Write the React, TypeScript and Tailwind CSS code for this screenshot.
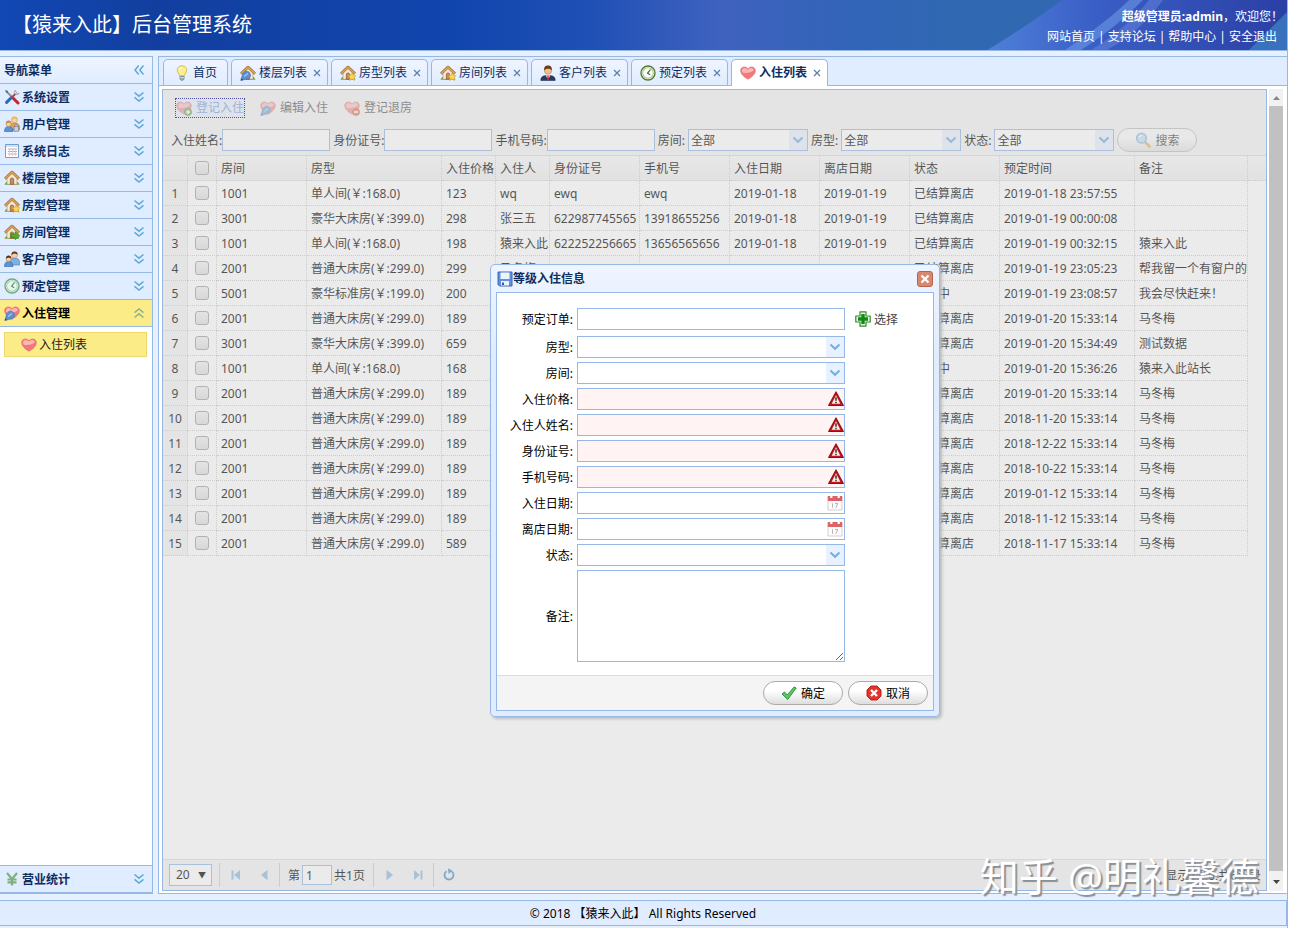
import { useState, type ReactNode } from 'react';
import clsx from 'clsx';

interface Guest {
    room: string;
    type: string;
    price: string;
    name?: string;
    idCard?: string;
    mobile?: string;
    arrive?: string;
    leave?: string;
    status: string;
    created: string;
    remark?: string;
}

const STANDARD = '普通大床房(￥:299.0)';
const LUXURY = '豪华大床房(￥:399.0)';
const SINGLE = '单人间(￥:168.0)';
const DONE = '已结算离店';

const guests: Guest[] = [
    { room: '1001', type: SINGLE, price: '123', name: 'wq', idCard: 'ewq', mobile: 'ewq', arrive: '2019-01-18', leave: '2019-01-19', status: DONE, created: '2019-01-18 23:57:55' },
    { room: '3001', type: LUXURY, price: '298', name: '张三五', idCard: '622987745565', mobile: '13918655256', arrive: '2019-01-18', leave: '2019-01-19', status: DONE, created: '2019-01-19 00:00:08' },
    { room: '1001', type: SINGLE, price: '198', name: '猿来入此', idCard: '622252256665', mobile: '13656565656', arrive: '2019-01-18', leave: '2019-01-19', status: DONE, created: '2019-01-19 00:32:15', remark: '猿来入此' },
    { room: '2001', type: STANDARD, price: '299', name: '马冬梅', status: DONE, created: '2019-01-19 23:05:23', remark: '帮我留一个有窗户的' },
    { room: '5001', type: '豪华标准房(￥:199.0)', price: '200', status: '入住中', created: '2019-01-19 23:08:57', remark: '我会尽快赶来！' },
    { room: '2001', type: STANDARD, price: '189', status: DONE, created: '2019-01-20 15:33:14', remark: '马冬梅' },
    { room: '3001', type: LUXURY, price: '659', status: DONE, created: '2019-01-20 15:34:49', remark: '测试数据' },
    { room: '1001', type: SINGLE, price: '168', status: '入住中', created: '2019-01-20 15:36:26', remark: '猿来入此站长' },
    { room: '2001', type: STANDARD, price: '189', status: DONE, created: '2019-01-20 15:33:14', remark: '马冬梅' },
    { room: '2001', type: STANDARD, price: '189', status: DONE, created: '2018-11-20 15:33:14', remark: '马冬梅' },
    { room: '2001', type: STANDARD, price: '189', status: DONE, created: '2018-12-22 15:33:14', remark: '马冬梅' },
    { room: '2001', type: STANDARD, price: '189', status: DONE, created: '2018-10-22 15:33:14', remark: '马冬梅' },
    { room: '2001', type: STANDARD, price: '189', status: DONE, created: '2019-01-12 15:33:14', remark: '马冬梅' },
    { room: '2001', type: STANDARD, price: '189', status: DONE, created: '2018-11-12 15:33:14', remark: '马冬梅' },
    { room: '2001', type: STANDARD, price: '589', status: DONE, created: '2018-11-17 15:33:14', remark: '马冬梅' },
];

const columns: { key: keyof Guest; title: string; width: string }[] = [
    { key: 'room', title: '房间', width: 'w-[90px]' },
    { key: 'type', title: '房型', width: 'w-[135px]' },
    { key: 'price', title: '入住价格', width: 'w-[54px]' },
    { key: 'name', title: '入住人', width: 'w-[54px]' },
    { key: 'idCard', title: '身份证号', width: 'w-[90px]' },
    { key: 'mobile', title: '手机号', width: 'w-[90px]' },
    { key: 'arrive', title: '入住日期', width: 'w-[90px]' },
    { key: 'leave', title: '离店日期', width: 'w-[90px]' },
    { key: 'status', title: '状态', width: 'w-[90px]' },
    { key: 'created', title: '预定时间', width: 'w-[135px]' },
    { key: 'remark', title: '备注', width: 'w-[113px]' },
];

/* ---------- icons ---------- */

function Icon({ children }: { children: ReactNode }) {
    return <svg viewBox="0 0 16 16" className="size-4 shrink-0" aria-hidden="true">{children}</svg>;
}

type Badge = 'add' | 'minus' | 'edit' | 'star' | 'arrow' | undefined;

function BadgeShape({ badge }: { badge: Badge }) {
    if (badge === 'add') {
        return (
            <g>
                <circle cx="12" cy="12" r="3.6" fill="#4fa32c" stroke="#2f7a17" strokeWidth=".7" />
                <path d="M12 10v4M10 12h4" stroke="#fff" strokeWidth="1.5" />
            </g>
        );
    }
    if (badge === 'minus') {
        return (
            <g>
                <circle cx="12" cy="12" r="3.6" fill="#e8562b" stroke="#c23d17" strokeWidth=".7" />
                <path d="M10 12h4" stroke="#fff" strokeWidth="1.6" />
            </g>
        );
    }
    if (badge === 'edit') {
        return (
            <g>
                <path d="M.8 15.500l2-7L5.500 6c3-.2 5.200 1.800 5.200 5L8 13.800z" fill="#5b8fd0" stroke="#4673b3" strokeWidth=".6" />
                <path d="M4 11.500l4-3" stroke="#a8cbf2" strokeWidth="1.200" />
                <path d="M.8 15.600l2.400-.7-1.700-1.700z" fill="#274a7c" />
            </g>
        );
    }
    if (badge === 'star') {
        return <path d="M12 8l1.200 2.500 2.700.3-2 1.900.6 2.700L12 14l-2.500 1.400.6-2.700-2-1.900 2.700-.3z" fill="#ffd84d" stroke="#d79f1e" strokeWidth=".6" />;
    }
    if (badge === 'arrow') {
        return <path d="M7 10h4.200V7.800l4.500 4-4.500 3.800v-2.200H7z" fill="#55b02e" stroke="#2e7d14" strokeWidth=".7" />;
    }
    return null;
}

function House({ badge }: { badge?: Badge }) {
    return (
        <Icon>
            <path d="M.5 14.800c1-3 3-3.500 7.500-3.500s6.500.5 7.500 3.500z" fill="#6bab3f" />
            <path d="M3 8l5-5 5 5v6.300H3z" fill="#f5ead6" stroke="#a88a5c" strokeWidth=".6" />
            <path d="M6.300 14.300V9.600a1.700 1.700 0 013.400 0v4.700z" fill="#c48a5c" stroke="#7d4a25" strokeWidth=".6" />
            <path d="M1 8.800L8 2l7 6.800" fill="none" stroke="#8a6232" strokeWidth="2.600" strokeLinejoin="round" />
            <path d="M1.200 8.600L8 2.100l6.800 6.500" fill="none" stroke="#e0a252" strokeWidth="1.600" />
            <BadgeShape badge={badge} />
        </Icon>
    );
}

function Heart({ badge }: { badge?: Badge }) {
    return (
        <Icon>
            <path d="M8 14.200C4 12 .7 9 .7 5.500.7 3.300 2.400 2 4.300 2 5.900 2 7.300 2.800 8 4c.7-1.200 2.100-2 3.700-2 1.900 0 3.600 1.300 3.600 3.500C15.300 9 12 12 8 14.200z" fill="#f4777b" stroke="#dc6a6c" strokeWidth=".7" />
            <path d="M2 5.800c0-1.800 1.200-2.700 2.500-2.700 1.400 0 2.500.7 3.100 1.900.8-1.200 2-1.900 3.500-1.900 1.500 0 2.700.8 2.800 2.200-2 2.300-8 3.500-11.500 2.200z" fill="#fbb7b4" />
            <BadgeShape badge={badge} />
        </Icon>
    );
}

function Clock({ soft }: { soft?: boolean }) {
    return (
        <Icon>
            <circle cx="8" cy="8" r="7" fill={soft ? '#e9f6ec' : '#fff'} stroke={soft ? '#6fa982' : '#567a35'} strokeWidth="1.400" />
            <circle cx="8" cy="8" r="5.300" fill="none" stroke={soft ? '#a9d3b5' : '#a8c88a'} strokeWidth="1.100" />
            <path d="M10.500 4.500L7.600 8.200l2.600 1.600" fill="none" stroke={soft ? '#5b8a6b' : '#3b5a3a'} strokeWidth="1.200" />
        </Icon>
    );
}

function Tools() {
    return (
        <Icon>
            <path d="M2.500 2.500l7 7" stroke="#8a939c" strokeWidth="1.800" />
            <path d="M1 1l2.800.8L4 4l-2-.2z" fill="#68717a" />
            <path d="M9.500 9.500l4.500 4.500" stroke="#c9252d" strokeWidth="3" strokeLinecap="round" />
            <path d="M7.500 8.500L2.600 13.400" stroke="#2c68b8" strokeWidth="3" strokeLinecap="round" />
            <path d="M12.500 3.700L7.500 8.700" stroke="#b3424a" strokeWidth="2" />
            <path d="M11.200 1.200c-1.500 1.600-1 3.300.1 4 1.200.8 2.900.6 4-.9l-2 .2-1-1.300z" fill="#d3d8dd" stroke="#7f8890" strokeWidth=".6" />
        </Icon>
    );
}

function Users({ lock }: { lock?: boolean }) {
    return (
        <Icon>
            <path d="M6.500 14V9.500C7 7.500 9 7 10.700 7c2.500 0 4.500 1 4.800 3.500V14z" fill={lock ? '#e3a34c' : '#7fb0df'} stroke={lock ? '#b2762b' : '#4d7dad'} strokeWidth=".6" />
            <circle cx="10.500" cy="4" r="2.900" fill="#f6d2a8" stroke="#b48350" strokeWidth=".5" />
            <path d="M7.600 4C7.300 1 9 .5 10.500.5s3.400.6 3 3.500c-1-1.600-4-2-5.900 0z" fill={lock ? '#efb955' : '#6b3d20'} />
            <path d="M.5 15.500c0-3.500 1.500-5 4.200-5 2.600 0 4.300 1.500 4.300 5z" fill="#5b94d6" stroke="#2f65a8" strokeWidth=".6" />
            <circle cx="4.600" cy="7.800" r="2.600" fill="#f6d2a8" stroke="#a87748" strokeWidth=".5" />
            <path d="M2 7.800c-.2-2.300 1-3.200 2.600-3.200s2.900.8 2.700 3.200C6.300 6.400 3.600 6.200 2 7.800z" fill={lock ? '#c88d3c' : '#5a3219'} />
            {lock && <path d="M10 10.500h4.500v4.800H10zM11 10.500V9.300a1.300 1.300 0 012.500 0v1.200" fill="#c9d2db" stroke="#6d7b88" strokeWidth=".7" />}
        </Icon>
    );
}

function Person() {
    return (
        <Icon>
            <path d="M.8 15.500c0-3.800 2-5 7.200-5s7.200 1.200 7.200 5z" fill="#2b3a5e" stroke="#1a2440" strokeWidth=".5" />
            <path d="M5.800 10.500L8 14.800l2.200-4.300z" fill="#fff" />
            <path d="M7.400 11h1.200l.5 3L8 15.200 6.900 14z" fill="#d0262b" />
            <circle cx="8" cy="5.500" r="3.700" fill="#f2c08d" stroke="#a66d3a" strokeWidth=".5" />
            <path d="M4.200 5.500C3.800 1.800 5.600.6 8 .6s4.200 1.200 3.800 4.900C10.500 3.300 6 3 4.200 5.500z" fill="#6b3a1b" />
        </Icon>
    );
}

function LogSheet() {
    return (
        <Icon>
            <path d="M1.500 1.500h13v13h-13z" fill="#fff" stroke="#6f9fca" />
            <path d="M2 2h12v2H2z" fill="#cde1f4" />
            <path d="M4 6h9M4 8.500h9M4 11h9" stroke="#e59a95" strokeWidth="1" />
            <path d="M5.500 5v8M8.500 5v8M11.500 5v8" stroke="#c3d3e2" strokeWidth=".8" />
        </Icon>
    );
}

function Bulb() {
    return (
        <Icon>
            <path d="M8 .8c-3 0-4.700 2-4.700 4.500 0 2.400 2.200 3.400 2.500 5.700h4.400c.3-2.300 2.500-3.300 2.500-5.700C12.700 2.800 11 .8 8 .8z" fill="#fbf08e" stroke="#c9b23f" strokeWidth=".8" />
            <path d="M5.500 4.500c.2-1.300 1-2 2.300-2" fill="none" stroke="#fff" strokeWidth="1.200" />
            <path d="M5.900 11.300h4.200v2.600L9 15.300H7l-1.100-1.400z" fill="#a3a9b0" stroke="#6f757c" strokeWidth=".6" />
            <path d="M6 12.700h4" stroke="#e3e6e9" strokeWidth=".8" />
        </Icon>
    );
}

function Yen() {
    return (
        <Icon>
            <path d="M3 2l5 6 5-6M8 8v6.500M3.500 8.500h9M3.500 11.300h9" fill="none" stroke="#7fb27b" strokeWidth="2.200" />
        </Icon>
    );
}

function Magnifier() {
    return (
        <Icon>
            <path d="M10 10l4.500 4.500" stroke="#e09a3c" strokeWidth="2.600" strokeLinecap="round" />
            <circle cx="6.500" cy="6.200" r="4.900" fill="#b8dcf8" stroke="#6fa3d6" strokeWidth="1.500" />
            <path d="M4 5.500c.5-1.400 1.500-2 3-2" fill="none" stroke="#fff" strokeWidth="1.200" />
        </Icon>
    );
}

function Floppy() {
    return (
        <Icon>
            <path d="M1 1h14v14H2.500L1 13.500z" fill="#5e90de" stroke="#3a69b8" />
            <path d="M3.500 1.500h9v6.500h-9z" fill="#eef4fd" />
            <path d="M4 10h8v4.500H4z" fill="#eef2f7" />
            <path d="M5 11.500h2V14H5z" fill="#2c5cab" />
        </Icon>
    );
}

function Warning() {
    return (
        <Icon>
            <path d="M8 1L15.300 14.500H.7z" fill="#c4161c" stroke="#8f1014" strokeWidth="1.200" strokeLinejoin="round" />
            <path d="M8 4.200l4.300 8.500H3.700z" fill="#fbecec" />
            <path d="M8 6.200v3.600M8 10.800v1.400" stroke="#3b3030" strokeWidth="1.500" />
        </Icon>
    );
}

function Plus() {
    return (
        <Icon>
            <path d="M5 .8h6V5h4.200v6H11v4.200H5V11H.8V5H5z" fill="#eaf7e6" stroke="#2f8f2b" strokeWidth="1.200" strokeLinejoin="round" />
            <path d="M6.300 3h3.400v3.300H13v3.400H9.700V13H6.300V9.700H3V6.300h3.300z" fill="#118a16" />
        </Icon>
    );
}

function Tick() {
    return (
        <Icon>
            <path d="M1 9l2.500-2 2.800 3L13 2l2.200 1L6.700 14.500z" fill="#5fc765" stroke="#268a33" strokeWidth=".9" strokeLinejoin="round" />
        </Icon>
    );
}

function Cancel() {
    return (
        <Icon>
            <path d="M5 1h6l4 4v6l-4 4H5l-4-4V5z" fill="#e3332d" stroke="#b3160f" strokeWidth=".9" strokeLinejoin="round" />
            <path d="M5 5l6 6M11 5l-6 6" stroke="#fff" strokeWidth="2.400" />
        </Icon>
    );
}

function Calendar() {
    return (
        <Icon>
            <path d="M1 2h14v13H1z" fill="#fdfbfb" stroke="#c9c3cc" strokeWidth=".8" />
            <path d="M.8 1h14.400v5H.8z" fill="#dc6468" />
            <path d="M3.200 0h2.200v3H3.200zM10.600 0h2.200v3h-2.200z" fill="#fff" />
            <path d="M5.500 8.300v4.500M8 8.500h2.800L8.800 12.800" fill="none" stroke="#b9b2b8" strokeWidth="1" />
        </Icon>
    );
}

function Chevrons({ dir }: { dir: 'down' | 'up' | 'left' }) {
    return (
        <svg viewBox="0 0 16 16" className={clsx('size-4 shrink-0', dir === 'up' && 'rotate-180', dir === 'left' && 'rotate-90')} aria-hidden="true">
            <path d="M3.500 3.500L8 7.200l4.500-3.700M3.500 8.300L8 12l4.500-3.700" fill="none" stroke={dir === 'up' ? '#8fb48c' : '#5ea9d6'} strokeWidth="1.500" />
        </svg>
    );
}

/* ---------- shared controls ---------- */

const fieldBox = 'h-[22px] border border-[#95b8e7] bg-white text-xs outline-none';

function Combo({ id, value, className }: { id: string; value?: string; className: string }) {
    return (
        <span className={clsx('relative inline-block', className)}>
            <select id={id} className={clsx(fieldBox, 'block w-full appearance-none rounded-none pt-px pl-[2px] text-black')}>
                <option>{value ?? ''}</option>
            </select>
            <span className="pointer-events-none absolute inset-y-px right-px flex w-[18px] items-center justify-center bg-[#e8f1ff]">
                <svg viewBox="0 0 12 12" className="size-3" aria-hidden="true">
                    <path d="M1.500 3.500L6 7.800l4.500-4.300" fill="none" stroke="#72aede" strokeWidth="2" />
                </svg>
            </span>
        </span>
    );
}

function PillButton({ icon, children, className }: { icon: ReactNode; children: ReactNode; className?: string }) {
    return (
        <button type="button" className={clsx('flex h-6 w-20 items-center justify-center gap-1 rounded-full border border-[#aaa] bg-linear-to-b from-white from-40% to-[#dedede] text-xs', className)}>
            {icon}
            <span className="pt-px">{children}</span>
        </button>
    );
}

function Check({ label }: { label: string }) {
    return (
        <input type="checkbox" aria-label={label} className="mx-auto block size-[14px] appearance-none rounded-[3px] border border-[#a0a0a0] bg-linear-to-b from-[#f2f2f2] to-[#e0e0e0]" />
    );
}

/* ---------- page parts ---------- */

function TopBanner() {
    const links = ['网站首页', '支持论坛', '帮助中心', '安全退出'];
    return (
        <header className="relative flex h-[51px] shrink-0 justify-between overflow-hidden border-b border-[#95b8e7] bg-[linear-gradient(90deg,#1148b4_0%,#123f9f_12%,#1145ae_35%,#1f50b5_46%,#3f62bf_56%,#3264b8_66%,#3068b2_74%,#3068b2_100%)] text-white">
            <svg viewBox="0 0 300 50" preserveAspectRatio="none" className="absolute right-0 h-full w-[300px]" aria-hidden="true">
                <defs>
                    <linearGradient id="ray" x1="0" x2="1">
                        <stop offset="0" stopColor="#4f80d8" />
                        <stop offset=".35" stopColor="#3a5fc6" />
                        <stop offset="1" stopColor="#2b3fa5" />
                    </linearGradient>
                </defs>
                <path d="M0 50C30 32 55 15 75 0h225v50z" fill="url(#ray)" />
                <path d="M78 50C105 32 128 14 142 0h14c-20 20-40 36-62 50z" fill="#6c97e4" opacity=".6" />
                <path d="M104 50C130 34 150 16 162 0h14c-16 22-34 38-56 50z" fill="#6a86dc" opacity=".5" />
                <path d="M262 50l38-38v38z" fill="#3f86c4" opacity=".7" />
            </svg>
            <h1 className="px-3 text-xl leading-[49px]">【猿来入此】后台管理系统</h1>
            <div className="relative pt-[7px] text-right text-xs leading-5">
                <p className="pr-1"><b>超级管理员:admin</b>，欢迎您！</p>
                <nav className="flex justify-end pr-[10px]">
                    {links.map((l, i) => (
                        <span key={l}>
                            {i > 0 && <span className="mx-[3px]">|</span>}
                            <a href="#">{l}</a>
                        </span>
                    ))}
                </nav>
            </div>
        </header>
    );
}

const menus: { label: string; icon: ReactNode }[] = [
    { label: '系统设置', icon: <Tools /> },
    { label: '用户管理', icon: <Users lock /> },
    { label: '系统日志', icon: <LogSheet /> },
    { label: '楼层管理', icon: <House /> },
    { label: '房型管理', icon: <House badge="star" /> },
    { label: '房间管理', icon: <House badge="arrow" /> },
    { label: '客户管理', icon: <Users /> },
    { label: '预定管理', icon: <Clock soft /> },
    { label: '入住管理', icon: <Heart badge="edit" /> },
];

function MenuHead({ label, icon, open, onClick }: { label: string; icon: ReactNode; open: boolean; onClick: () => void }) {
    return (
        <button
            type="button"
            onClick={onClick}
            className={clsx(
                'flex h-[27px] w-full shrink-0 items-center gap-[2px] border-b border-[#95b8e7] pr-[5px] pl-1 text-xs font-bold',
                open ? 'bg-[#fbec88] text-black' : 'bg-[#e0ecff] text-[#0e2d5f]',
            )}
        >
            {icon}
            <span className="flex-1 pt-[2px] text-left">{label}</span>
            <Chevrons dir={open ? 'up' : 'down'} />
        </button>
    );
}

function Sidebar() {
    const [open, setOpen] = useState('入住管理');
    return (
        <aside className="flex w-[153px] shrink-0 flex-col border border-l-0 border-[#95b8e7] bg-white">
            <div className="flex h-[27px] shrink-0 items-center border-b border-[#95b8e7] bg-linear-to-b from-[#eff5ff] to-[#e0ecff] pr-[5px] pl-1 text-xs font-bold text-[#0e2d5f]">
                <h2 className="flex-1 pt-[2px]">导航菜单</h2>
                <Chevrons dir="left" />
            </div>
            {menus.map(m => (
                <MenuHead key={m.label} {...m} open={open === m.label} onClick={() => setOpen(m.label)} />
            ))}
            <div className="flex-1 pt-[5px] pr-[5px] pl-1">
                <a href="#" className="flex h-[25px] items-center gap-[2px] border border-[#ecd96f] bg-[#fbec88] pl-4 text-xs text-[#222]">
                    <Heart />
                    入住列表
                </a>
            </div>
            <div className="border-t border-[#95b8e7]">
                <MenuHead label="营业统计" icon={<Yen />} open={false} onClick={() => setOpen('营业统计')} />
            </div>
        </aside>
    );
}

const tabs: { label: string; icon: ReactNode }[] = [
    { label: '首页', icon: <Bulb /> },
    { label: '楼层列表', icon: <House badge="edit" /> },
    { label: '房型列表', icon: <House badge="star" /> },
    { label: '房间列表', icon: <House badge="star" /> },
    { label: '客户列表', icon: <Person /> },
    { label: '预定列表', icon: <Clock /> },
    { label: '入住列表', icon: <Heart /> },
];

function TabStrip() {
    const [active, setActive] = useState('入住列表');
    return (
        <div className="flex h-[29px] shrink-0 items-end gap-[3px] border-b border-[#95b8e7] bg-[#e0ecff] pl-1">
            {tabs.map((t, i) => (
                <div
                    key={t.label}
                    className={clsx(
                        'flex items-center rounded-t-[5px] border border-b-0 border-[#95b8e7] text-xs text-[#0e2d5f]',
                        i === 0 ? 'px-2' : 'px-[6px]',
                        t.label === active ? '-mb-px h-[27px] bg-white font-bold' : 'h-[26px] bg-linear-to-b from-[#eff5ff] to-[#e0ecff]',
                    )}
                >
                    <button type="button" onClick={() => setActive(t.label)} className="flex items-center gap-[3px] px-[2px]">
                        {t.icon}
                        {t.label}
                    </button>
                    {i > 0 && (
                        <button type="button" aria-label={`关闭${t.label}`} className="ml-1">
                            <svg viewBox="0 0 8 8" className="size-2" aria-hidden="true">
                                <path d="M1 1l6 6M7 1L1 7" stroke="#5b7ea8" strokeWidth="1.200" />
                            </svg>
                        </button>
                    )}
                </div>
            ))}
        </div>
    );
}

function Toolbar() {
    const plain = 'flex h-5 items-center gap-1 px-px text-[#222] opacity-70';
    return (
        <div className="border-b border-[#ddd] bg-[#f4f4f4] text-xs">
            <div className="flex h-[35px] items-center gap-[14px] pl-3">
                <button type="button" className="bg-[#eaf2ff] px-px text-[#4d80d6] outline-1 -outline-offset-1 outline-dotted outline-[#00008b]">
                    <span className="flex h-5 items-center gap-1 opacity-70">
                        <Heart badge="add" />
                        登记入住
                    </span>
                </button>
                <button type="button" className={plain}><Heart badge="edit" />编辑入住</button>
                <button type="button" className={plain}><Heart badge="minus" />登记退房</button>
            </div>
            <div className="flex h-[30px] items-center gap-[3px] pl-2">
                {['入住姓名', '身份证号', '手机号码'].map(l => (
                    <div key={l} className="flex items-center">
                        <label htmlFor={`q-${l}`} className="pt-[2px]">{l}:</label>
                        <input id={`q-${l}`} className={clsx(fieldBox, 'w-[108px]')} />
                    </div>
                ))}
                {['房间', '房型', '状态'].map(l => (
                    <div key={l} className="flex items-center gap-[3px]">
                        <label htmlFor={`q-${l}`} className="pt-[2px]">{l}:</label>
                        <Combo id={`q-${l}`} value="全部" className="w-[120px]" />
                    </div>
                ))}
                <PillButton icon={<Magnifier />} className="opacity-70">搜索</PillButton>
            </div>
        </div>
    );
}

function DataGrid() {
    const cell = 'overflow-hidden border-r border-b border-dotted border-[#ccc] whitespace-nowrap';
    return (
        <table className="w-full table-fixed border-separate border-spacing-0 text-left text-xs">
            <thead>
                <tr className="h-[25px] bg-linear-to-b from-[#f9f9f9] to-[#efefef]">
                    <th className={clsx(cell, 'w-[25px]')} />
                    <th className={clsx(cell, 'w-[29px]')}><Check label="全选" /></th>
                    {columns.map(c => (
                        <th key={c.key} className={clsx(cell, c.width, 'pt-[2px] pl-1 font-normal')}>{c.title}</th>
                    ))}
                    <th className="border-b border-dotted border-[#ccc]" />
                </tr>
            </thead>
            <tbody>
                {guests.map((g, i) => (
                    <tr key={i} className="h-[25px]">
                        <td className={clsx(cell, 'bg-[#f4f4f4] pt-[2px] text-center')}>{i + 1}</td>
                        <td className={cell}><Check label={`选择第${i + 1}行`} /></td>
                        {columns.map(c => (
                            <td key={c.key} className={clsx(cell, 'pt-[2px] pl-1')}>{g[c.key]}</td>
                        ))}
                        <td />
                    </tr>
                ))}
            </tbody>
        </table>
    );
}

function PagerButton({ label, d }: { label: string; d: string }) {
    return (
        <button type="button" aria-label={label} className="flex size-7 items-center justify-center">
            <svg viewBox="0 0 16 16" className="size-4" aria-hidden="true"><path d={d} fill="#8fbbe0" /></svg>
        </button>
    );
}

function Pager() {
    const sep = <span className="mx-px h-6 w-px bg-[#ccc]" />;
    return (
        <div className="flex h-[31px] shrink-0 items-center border-t border-[#ddd] bg-[#f4f4f4] pr-[5px] pl-[6px] text-xs">
            <span className="relative mr-[6px]">
                <select aria-label="每页条数" className={clsx(fieldBox, 'block w-[43px] appearance-none pl-[6px]')}>
                    <option>20</option>
                </select>
                <span className="pointer-events-none absolute top-[6px] right-[6px] text-[8px] leading-[10px]">▼</span>
            </span>
            {sep}
            <span className="w-px" />
            <PagerButton label="首页" d="M3.500 3.500h2v9h-2zM12 3v10L6 8z" />
            <PagerButton label="上一页" d="M11.500 2.800v10.400L5 8z" />
            {sep}
            <label htmlFor="page-no" className="ml-[7px] pt-[2px]">第</label>
            <input id="page-no" defaultValue="1" className="mx-[2px] h-5 w-[30px] border border-[#95b8e7] bg-white pl-[3px]" />
            <span className="mr-[7px] pt-[2px]">共1页</span>
            {sep}
            <span className="w-px" />
            <PagerButton label="下一页" d="M4.500 2.800v10.400L11 8z" />
            <PagerButton label="末页" d="M10.500 3.500h2v9h-2zM4 3v10l6-5z" />
            {sep}
            <button type="button" aria-label="刷新" className="flex size-7 items-center justify-center">
                <svg viewBox="0 0 16 16" className="size-4" aria-hidden="true">
                    <path d="M10.500 4.300A4.500 4.500 0 115.600 4.200" fill="none" stroke="#4f93c4" strokeWidth="1.800" />
                    <path d="M7 1.200l4.300 2.500L7.500 7z" fill="#4f93c4" />
                </svg>
            </button>
            <span className="ml-auto pt-[2px]">显示1到6,共6记录</span>
        </div>
    );
}

const fields: { label: string; kind: 'combo' | 'required' | 'date' }[] = [
    { label: '房型', kind: 'combo' },
    { label: '房间', kind: 'combo' },
    { label: '入住价格', kind: 'required' },
    { label: '入住人姓名', kind: 'required' },
    { label: '身份证号', kind: 'required' },
    { label: '手机号码', kind: 'required' },
    { label: '入住日期', kind: 'date' },
    { label: '离店日期', kind: 'date' },
    { label: '状态', kind: 'combo' },
];

function CheckinDialog() {
    const label = 'w-[76px] shrink-0 pt-[2px] text-right';
    return (
        <div role="dialog" aria-label="等级入住信息" className="absolute top-[264px] left-[490px] w-[450px] rounded-[5px] border border-[#95b8e7] bg-linear-to-b from-[#eff5ff] to-[#e0ecff] to-20% p-[5px] pt-0 text-xs shadow-[2px_2px_3px_#bbb]">
            <div className="flex h-[27px] items-center px-px font-bold text-[#0e2d5f]">
                <Floppy />
                <h2 className="flex-1">等级入住信息</h2>
                <button type="button" aria-label="关闭" className="flex size-4 items-center justify-center rounded-[3px] border border-[#b5654d] bg-[#d98870]">
                    <svg viewBox="0 0 10 10" className="size-[10px]" aria-hidden="true">
                        <path d="M1.500 1.500l7 7M8.500 1.500l-7 7" stroke="#fff" strokeWidth="2.200" />
                    </svg>
                </button>
            </div>
            <div className="border border-[#95b8e7] bg-white">
                <form className="flex flex-col gap-1 py-[13px]">
                    <div className="flex h-[26px] items-center gap-1">
                        <label htmlFor="f-order" className={label}>预定订单:</label>
                        <input id="f-order" className={clsx(fieldBox, 'w-[268px]')} />
                        <button type="button" className="ml-[6px] flex items-center gap-[3px] text-[#444]">
                            <Plus />
                            <span className="pt-[2px]">选择</span>
                        </button>
                    </div>
                    {fields.map(f => (
                        <div key={f.label} className="flex items-center gap-1">
                            <label htmlFor={`f-${f.label}`} className={label}>{f.label}:</label>
                            {f.kind === 'combo' && <Combo id={`f-${f.label}`} className="w-[268px]" />}
                            {f.kind === 'required' && (
                                <span className="relative">
                                    <input id={`f-${f.label}`} required className="block h-[22px] w-[268px] border border-[#95b8e7] bg-[#fff3f3] outline-none" />
                                    <span className="absolute top-[3px] right-px"><Warning /></span>
                                </span>
                            )}
                            {f.kind === 'date' && (
                                <span className="relative">
                                    <input id={`f-${f.label}`} className={clsx(fieldBox, 'block w-[268px]')} />
                                    <button type="button" aria-label="选择日期" className="absolute top-[3px] right-[2px]"><Calendar /></button>
                                </span>
                            )}
                        </div>
                    ))}
                    <div className="flex items-center gap-1">
                        <label htmlFor="f-remark" className={label}>备注:</label>
                        <textarea id="f-remark" className="block h-[92px] w-[268px] border border-[#95b8e7] bg-white outline-none" />
                    </div>
                </form>
                <div className="flex justify-end gap-[5px] border-t border-[#ddd] bg-[#f4f4f4] p-[5px]">
                    <PillButton icon={<Tick />}>确定</PillButton>
                    <PillButton icon={<Cancel />}>取消</PillButton>
                </div>
            </div>
        </div>
    );
}

function ScrollTrack() {
    return (
        <div className="mr-1 ml-[2px] flex w-[14px] shrink-0 flex-col items-center bg-[#f1f1f1]">
            <svg viewBox="0 0 13 17" className="h-[17px] w-[13px]" aria-hidden="true"><path d="M3 11l3.500-4L10 11z" fill="#888" /></svg>
            <div className="w-full flex-1 bg-[#c1c1c1]" />
            <svg viewBox="0 0 13 20" className="h-5 w-[13px]" aria-hidden="true"><path d="M3 9l3.500 4L10 9z" fill="#444" /></svg>
        </div>
    );
}

export default function App() {
    return (
        <div className="h-screen bg-white pr-1 font-['Noto_Sans','Noto_Sans_CJK_SC',sans-serif] text-black">
            <div className="relative flex h-full flex-col border-r border-[#95b8e7] bg-[#e6f1fd]">
                <TopBanner />
                <div className="mt-[5px] flex min-h-0 flex-1 gap-[5px]">
                    <Sidebar />
                    <main className="flex min-w-0 flex-1 flex-col border border-r-0 border-[#95b8e7] bg-white">
                        <TabStrip />
                        <div className="flex min-h-0 flex-1 pt-[3px] pb-[2px] pl-[3px]">
                            <section className="relative flex min-w-0 flex-1 flex-col border border-[#95b8e7] bg-white">
                                <Toolbar />
                                <div className="min-h-0 flex-1 overflow-hidden">
                                    <DataGrid />
                                </div>
                                <Pager />
                                {/* modal mask */}
                                <div className="absolute inset-0 bg-[#ccc]/40" />
                            </section>
                            <ScrollTrack />
                        </div>
                    </main>
                </div>
                <footer className="mt-[6px] mb-[2px] h-[26px] shrink-0 border border-l-0 border-[#95b8e7] bg-[#e0ecff] text-center text-xs leading-[26px]">
                    © 2018 【猿来入此】 All Rights Reserved
                </footer>
                <CheckinDialog />
                <div className="pointer-events-none absolute right-7 bottom-[30px] text-[39px] leading-[44px] text-white [text-shadow:2px_2px_1px_#8a8f96]">知乎 @明礼馨德</div>
            </div>
        </div>
    );
}
